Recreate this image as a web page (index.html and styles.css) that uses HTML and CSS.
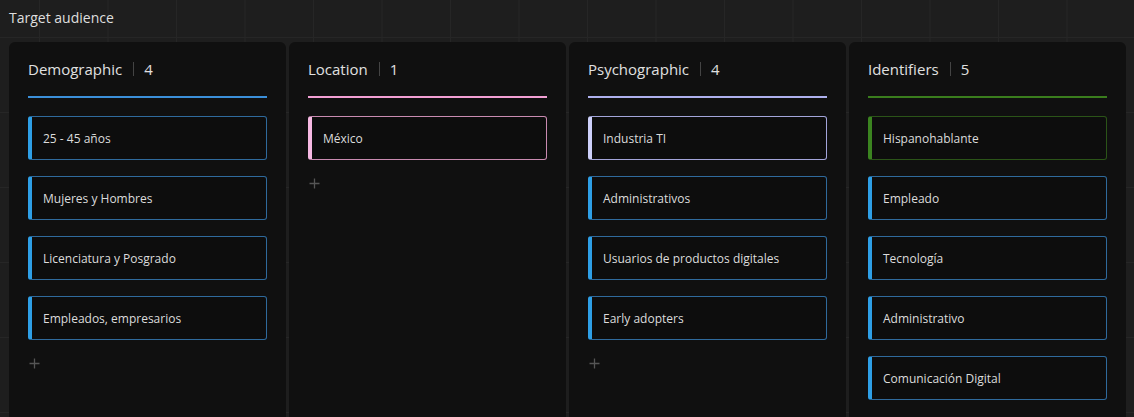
FILE: index.html
```html
<!DOCTYPE html>
<html lang="es">
<head>
<meta charset="utf-8">
<title>Target audience</title>
<link rel="stylesheet" href="styles.css">
</head>
<body>
<div class="page">
  <div class="title">Target audience</div>
  <div class="board">
    <section class="col col-blue">
      <header class="col-head"><span class="col-name">Demographic</span><span class="sep"></span><span class="count">4</span></header>
      <div class="cards">
        <div class="card">25 - 45 años</div>
        <div class="card">Mujeres y Hombres</div>
        <div class="card">Licenciatura y Posgrado</div>
        <div class="card">Empleados, empresarios</div>
      </div>
      <div class="add"><svg width="11" height="11" viewBox="0 0 11 11"><path d="M5.5 0.5v10M0.5 5.5h10" stroke="#555" stroke-width="1.3"/></svg></div>
    </section>
    <section class="col col-pink">
      <header class="col-head"><span class="col-name">Location</span><span class="sep"></span><span class="count">1</span></header>
      <div class="cards">
        <div class="card card-pink">México</div>
      </div>
      <div class="add"><svg width="11" height="11" viewBox="0 0 11 11"><path d="M5.5 0.5v10M0.5 5.5h10" stroke="#555" stroke-width="1.3"/></svg></div>
    </section>
    <section class="col col-lav">
      <header class="col-head"><span class="col-name">Psychographic</span><span class="sep"></span><span class="count">4</span></header>
      <div class="cards">
        <div class="card card-lav">Industria TI</div>
        <div class="card">Administrativos</div>
        <div class="card">Usuarios de productos digitales</div>
        <div class="card">Early adopters</div>
      </div>
      <div class="add"><svg width="11" height="11" viewBox="0 0 11 11"><path d="M5.5 0.5v10M0.5 5.5h10" stroke="#555" stroke-width="1.3"/></svg></div>
    </section>
    <section class="col col-green">
      <header class="col-head"><span class="col-name">Identifiers</span><span class="sep"></span><span class="count">5</span></header>
      <div class="cards">
        <div class="card card-green">Hispanohablante</div>
        <div class="card">Empleado</div>
        <div class="card">Tecnología</div>
        <div class="card">Administrativo</div>
        <div class="card">Comunicación Digital</div>
      </div>
      <div class="add"><svg width="11" height="11" viewBox="0 0 11 11"><path d="M5.5 0.5v10M0.5 5.5h10" stroke="#555" stroke-width="1.3"/></svg></div>
    </section>
  </div>
</div>
</body>
</html>
```
FILE: styles.css
```css
html, body {
  margin: 0;
  padding: 0;
  height: 100%;
  overflow: hidden;
}
body {
  background-color: #1e1e1e;
  background-image:
    linear-gradient(to right, #262626 1px, transparent 1px),
    linear-gradient(to bottom, #262626 1px, transparent 1px);
  background-size: 68.5px 75px;
  background-position: 39px 37px;
  font-family: "Open Sans", "Noto Sans", sans-serif;
  color: #e2e2e2;
}
.page {
  padding: 0 8px 0 9px;
}
.title {
  height: 37px;
  line-height: 36px;
  font-size: 14px;
  color: #dedede;
  margin-bottom: 5px;
}
.board {
  display: grid;
  grid-template-columns: repeat(4, 277px);
  gap: 3px;
}
.col {
  background: #101010;
  border-radius: 6px 6px 0 0;
  padding: 0 19px;
  height: 375px;
}
.col-head {
  display: flex;
  align-items: center;
  height: 56px;
  box-sizing: border-box;
  font-size: 15px;
  color: #e0e0e0;
  border-bottom: 2px solid #3b8fd9;
  margin-bottom: 18px;
}
.col-pink .col-head { border-bottom-color: #f29fd4; }
.col-lav .col-head { border-bottom-color: #aeb0ee; }
.col-green .col-head { border-bottom-color: #3a7d1d; }
.sep {
  width: 1px;
  height: 14px;
  background: #444;
  margin: 0 10px 0 11px;
}
.count {
  color: #e0e0e0;
}
.cards {
  display: flex;
  flex-direction: column;
  gap: 16px;
}
.card {
  box-sizing: border-box;
  height: 44px;
  display: flex;
  align-items: center;
  padding-left: 11px;
  font-size: 12px;
  color: #dcdcdc;
  background: #0d0d0d;
  border: 1px solid #2f6a9c;
  border-left: 4px solid #2e9fe6;
  border-radius: 3px;
}
.card-pink {
  border-color: #c98bb1;
  border-left-color: #f6b9e3;
}
.card-lav {
  border-color: #a3a5da;
  border-left-color: #cdd0fa;
}
.card-green {
  border-color: #2b5418;
  border-left-color: #3b8420;
}
.add {
  margin-top: 18px;
  padding-left: 1px;
  height: 11px;
  display: flex;
}
```
